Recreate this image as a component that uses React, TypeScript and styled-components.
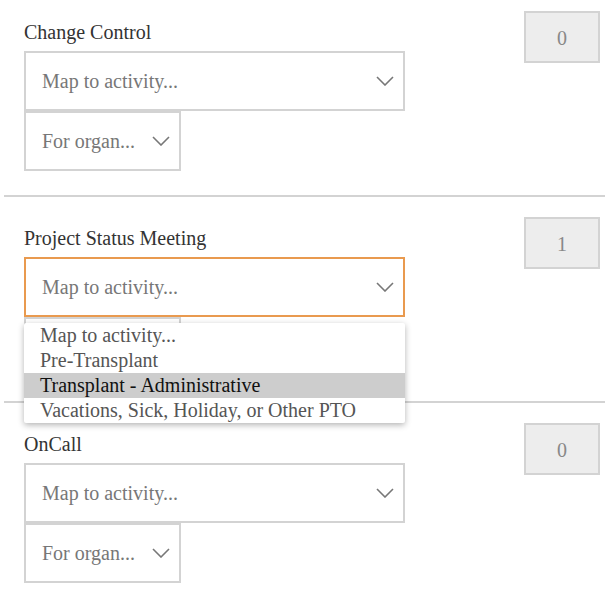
import React from 'react';
import styled, { createGlobalStyle } from 'styled-components';

const GlobalStyle = createGlobalStyle`
  html, body {
    margin: 0;
    padding: 0;
    background: #fff;
    font-family: "Liberation Serif", "Times New Roman", serif;
    overflow: hidden;
  }
`;

interface Entry {
  name: string;
  count: number;
  open?: boolean;
}

const entries: Entry[] = [
  { name: 'Change Control', count: 0 },
  { name: 'Project Status Meeting', count: 1, open: true },
  { name: 'OnCall', count: 0 },
];

const options = [
  'Map to activity...',
  'Pre-Transplant',
  'Transplant - Administrative',
  'Vacations, Sick, Holiday, or Other PTO',
];

const Chevron: React.FC = () => (
  <svg width="18" height="10" viewBox="0 0 18 10" fill="none">
    <polyline points="1,1 9,9 17,1" stroke="#777" strokeWidth="1.6" />
  </svg>
);

const App: React.FC = () => {
  return (
    <>
      <GlobalStyle />
      <List>
        {entries.map((entry) => (
          <Row key={entry.name}>
            <Fields>
              <Label>{entry.name}</Label>
              <SelectWrap>
                <Select $wide $focused={entry.open}>
                  <SelectText>Map to activity...</SelectText>
                  <Chevron />
                </Select>
                {entry.open && (
                  <Menu>
                    {options.map((opt, i) => (
                      <Option key={opt} $active={i === 2}>
                        {opt}
                      </Option>
                    ))}
                  </Menu>
                )}
              </SelectWrap>
              <Select>
                <SelectText>For organ...</SelectText>
                <Chevron />
              </Select>
            </Fields>
            <Counter>{entry.count}</Counter>
          </Row>
        ))}
      </List>
    </>
  );
};

const List = styled.div`
  margin-top: -9px;
  padding-left: 4px;
`;

const Row = styled.div`
  display: flex;
  justify-content: space-between;
  align-items: flex-start;
  padding: 20px 5px 24px 20px;
  border-bottom: 2px solid #d3d3d3;
`;

const Fields = styled.div`
  display: flex;
  flex-direction: column;
  align-items: flex-start;
`;

const Label = styled.div`
  margin: 11px 0 9px;
  font-size: 20px;
  line-height: 20px;
  color: #333;
`;

const SelectWrap = styled.div`
  position: relative;
`;

const Select = styled.div<{ $wide?: boolean; $focused?: boolean }>`
  box-sizing: border-box;
  width: ${(p) => (p.$wide ? '381px' : '157px')};
  height: 60px;
  display: flex;
  align-items: center;
  justify-content: space-between;
  padding: 0 9px 0 16px;
  border: 2px solid ${(p) => (p.$focused ? '#e99a4f' : '#d3d3d3')};
  background: #fff;
`;

const SelectText = styled.span`
  font-size: 20px;
  color: #777;
`;

const Menu = styled.div`
  position: absolute;
  top: 66px;
  left: 0;
  width: 381px;
  background: #fff;
  border-radius: 2px;
  box-shadow: 0 2px 6px rgba(0, 0, 0, 0.3);
  z-index: 2;
`;

const Option = styled.div<{ $active?: boolean }>`
  height: 25px;
  line-height: 25px;
  padding-left: 16px;
  font-size: 20px;
  color: ${(p) => (p.$active ? '#111' : '#555')};
  background: ${(p) => (p.$active ? '#cdcdcd' : 'transparent')};
  white-space: nowrap;
`;

const Counter = styled.div`
  box-sizing: border-box;
  width: 76px;
  height: 52px;
  display: flex;
  align-items: center;
  justify-content: center;
  padding-top: 2px;
  border: 2px solid #d3d3d3;
  background: #ededed;
  font-size: 20px;
  color: #888;
`;

export default App;
